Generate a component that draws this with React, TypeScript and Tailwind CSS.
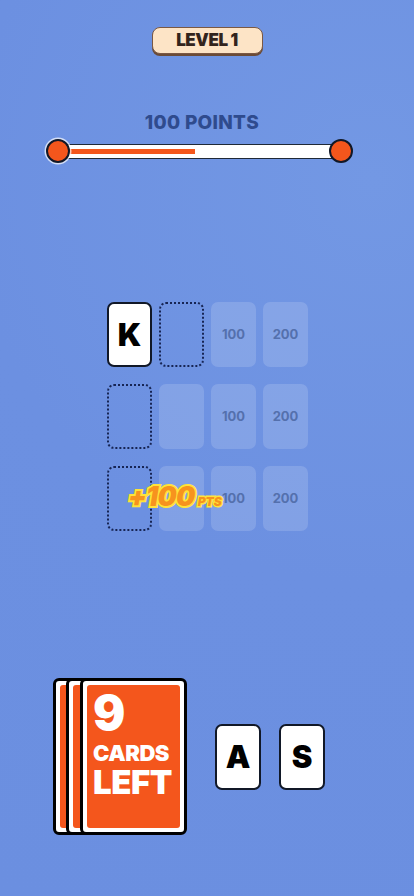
import React from 'react';

const font = { fontFamily: 'Inter, "Noto Sans", sans-serif' };

function LetterCard({ letter, big }: { letter: string; big?: boolean }) {
  return (
    <div
      className={`flex items-center justify-center rounded-[7px] border-2 border-[#111827] bg-white ${
        big ? 'h-[66px] w-[46px]' : 'h-[65px] w-[45px]'
      }`}
    >
      <span className="text-[31px] font-black leading-none text-black">{letter}</span>
    </div>
  );
}

function SlotCard() {
  return <div className="h-[65px] w-[45px] rounded-[7px] border-[2.5px] border-dotted border-[#172554]" />;
}

function GhostCard({ value }: { value?: string }) {
  return (
    <div className="flex h-[65px] w-[45px] items-center justify-center rounded-[7px] bg-white/15">
      {value && <span className="text-[13px] font-bold text-[#5470ad]">{value}</span>}
    </div>
  );
}

function DeckCard({ className, front }: { className?: string; front?: boolean }) {
  return (
    <div className={`h-[157px] w-[107px] shrink-0 rounded-[6px] border-[3px] border-black bg-white p-[4px] ${className ?? ''}`}>
      <div className="flex h-full w-full flex-col rounded-[3px] bg-[#f4561c] px-[6px] pt-[6px] text-white">
        {front && (
          <>
            <span className="text-[48px] font-black leading-[44px]">9</span>
            <span className="mt-[6px] text-[22px] font-black leading-[24px] tracking-[-0.5px]">CARDS</span>
            <span className="text-[33px] font-black leading-[34px] tracking-[-0.5px]">LEFT</span>
          </>
        )}
      </div>
    </div>
  );
}

export default function App() {
  return (
    <div
      className="flex h-[896px] w-[414px] flex-col overflow-hidden bg-[radial-gradient(circle_at_90%_20%,#7398e4_0%,#6c90e1_50%,#6b8fe0_100%)]"
      style={font}
    >
      {/* level pill */}
      <div className="flex justify-center pt-[27px]">
        <div className="flex h-[27px] w-[111px] items-center justify-center rounded-[8px] border-[1.5px] border-[#7a5844] bg-[#fde4c6] shadow-[0_2px_0_#6b4b37]">
          <span className="text-[17px] font-black tracking-tight text-[#33241c]">LEVEL 1</span>
        </div>
      </div>

      {/* points */}
      <div className="mt-[58px] pr-[10px] text-center text-[19px] font-extrabold leading-[22px] tracking-[0.3px] text-[#2f4b8e]">
        100 POINTS
      </div>

      <div className="mt-[10px] flex justify-center pr-[15px]">
        <div className="relative h-[15px] w-[285px] rounded-[2px] border-[1.5px] border-[#1f2937] bg-white">
          <div className="absolute left-[10px] top-[3.5px] h-[5px] w-[127px] bg-[#f4561c]" />
          <div className="absolute left-[-12px] top-[-6px] h-[24px] w-[24px] rounded-full border-2 border-[#111827] bg-[#f4561c] ring-[1.5px] ring-white/70" />
          <div className="absolute right-[-12px] top-[-6px] h-[24px] w-[24px] rounded-full border-2 border-[#111827] bg-[#f4561c]" />
        </div>
      </div>

      {/* board */}
      <div className="mt-[143px] flex justify-center pl-[1px]">
        <div className="relative grid grid-cols-4 gap-x-[7px] gap-y-[17px]">
          <LetterCard letter="K" />
          <SlotCard />
          <GhostCard value="100" />
          <GhostCard value="200" />

          <SlotCard />
          <GhostCard />
          <GhostCard value="100" />
          <GhostCard value="200" />

          <SlotCard />
          <GhostCard />
          <GhostCard value="100" />
          <GhostCard value="200" />

          <div className="absolute left-[21px] top-[175px] flex items-baseline italic">
            <span className="text-[27px] font-black tracking-tight text-[#f7931e] [-webkit-text-stroke:4px_#ffe33a] [paint-order:stroke_fill]">
              +100
            </span>
            <span className="ml-[3px] text-[12px] font-black text-[#f7931e] [-webkit-text-stroke:3px_#ffe33a] [paint-order:stroke_fill]">
              PTS
            </span>
          </div>
        </div>
      </div>

      {/* hand */}
      <div className="mt-[147px] flex items-center pl-[53px]">
        <div className="flex">
          <DeckCard />
          <DeckCard className="-ml-[94px]" />
          <DeckCard className="-ml-[93px]" front />
        </div>
        <div className="ml-[28px] flex gap-[18px]">
          <LetterCard letter="A" big />
          <LetterCard letter="S" big />
        </div>
      </div>
    </div>
  );
}
